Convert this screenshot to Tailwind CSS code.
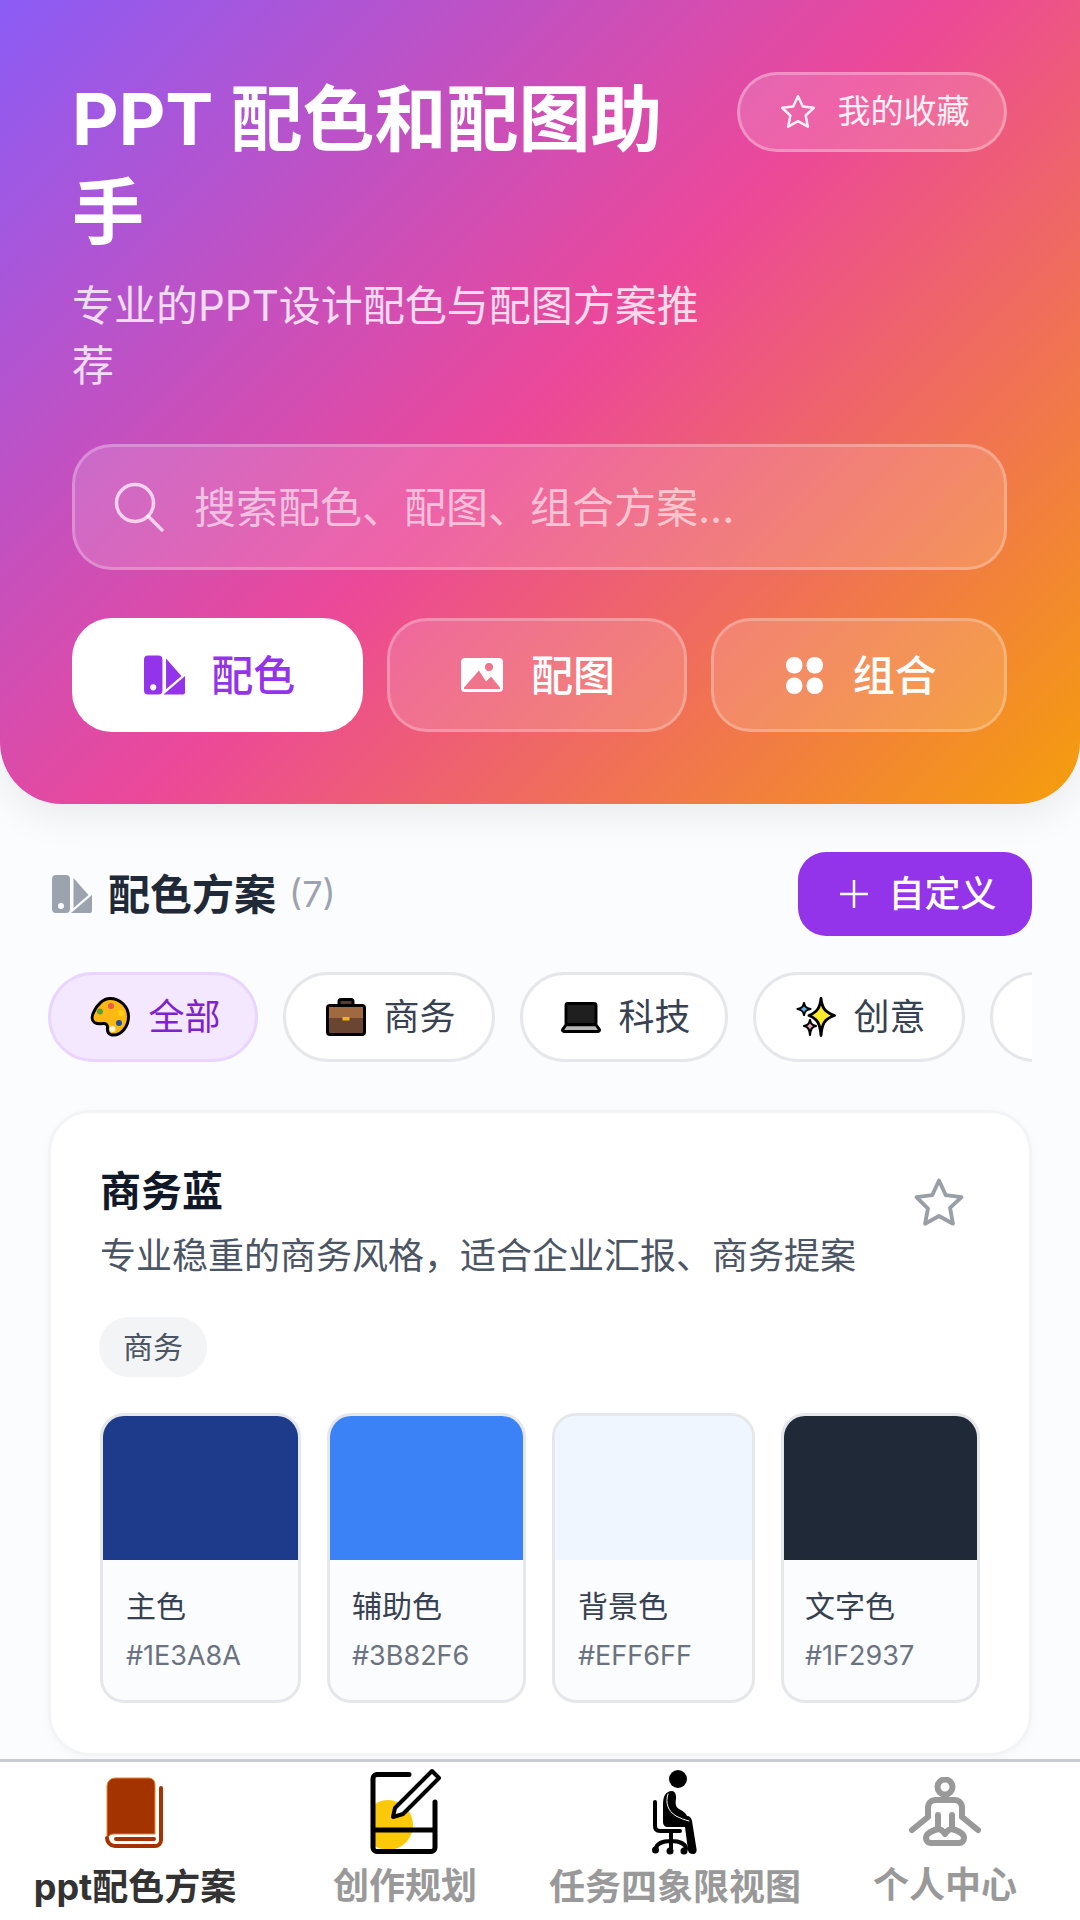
<!DOCTYPE html>
<html lang="zh-CN">
<head>
  <meta charset="UTF-8">
  <meta name="viewport" content="width=device-width, initial-scale=1">
  <title>PPT 配色和配图助手</title>
  <script src="https://cdn.jsdelivr.net/npm/@tailwindcss/browser@4"></script>
</head>
<body class="bg-[#fafcfe] font-['Inter','Noto_Sans_CJK_SC',sans-serif]">
<div class="w-[1080px] h-[1920px] flex flex-col overflow-hidden">

  <!-- 头部 -->
  <header class="h-[804px] shrink-0 pl-[72px] pr-[73px] pt-[72px] rounded-b-[62px] bg-[linear-gradient(135deg,#8b5cf6_0%,#ec4899_50%,#f59e0b_100%)] shadow-[0_10px_40px_rgba(0,0,0,0.08)] relative z-10">
    <div class="flex items-start gap-[24px]">
      <div class="flex-1">
        <h1 class="text-[72px] leading-[93px] font-bold text-white">PPT 配色和配图助手</h1>
        <p class="mt-[18px] text-[42px] leading-[60px] text-white/80">专业的PPT设计配色与配图方案推荐</p>
      </div>
      <button class="w-[270px] h-[80px] shrink-0 flex items-center justify-center gap-[20px] pl-[3px] rounded-full bg-white/15 border-[3px] border-white/30 text-white/90 text-[33px]">
        <svg class="w-[40px] h-[40px]" viewBox="0 0 24 24" fill="none" stroke="currentColor" stroke-width="1.500" stroke-linejoin="round"><path d="M12 2.500l2.900 6.200 6.600.8-4.900 4.600 1.300 6.700L12 17.500l-5.900 3.300 1.300-6.700L2.500 9.500l6.600-.8z"/></svg>
        <span>我的收藏</span>
      </button>
    </div>

    <div class="mt-[48px] h-[126px] flex items-center pl-[39px] gap-[30px] rounded-[40px] bg-white/15 border-[3px] border-white/25">
      <svg class="w-[50px] h-[50px] shrink-0 text-white/70" viewBox="0 0 50 50" fill="none" stroke="currentColor" stroke-width="3.500" stroke-linecap="round"><circle cx="21" cy="21" r="18.500"/><path d="M34 34l14 14"/></svg>
      <span class="text-[42px] text-white/60">搜索配色、配图、组合方案...</span>
    </div>

    <div class="mt-[48px] grid grid-cols-[291fr_299fr_296fr] gap-[24px]">
      <button class="h-[114px] flex items-center justify-center gap-[26px] pl-[4px] rounded-[40px] bg-white text-[#9333ea] text-[42px] font-medium">
        <svg class="w-[41px] h-[40px]" viewBox="0 0 40 38" fill="currentColor"><path fill-rule="evenodd" d="M4 0h10a4 4 0 0 1 4 4v30a4 4 0 0 1-4 4H4a4 4 0 0 1-4-4V4a4 4 0 0 1 4-4zm5 28a3 3 0 1 0 0 6 3 3 0 0 0 0-6z"/><path d="M21.500 3l15 17-15 13z"/><path d="M19 38l21-18v16a2 2 0 0 1-2 2z"/></svg>
        <span>配色</span>
      </button>
      <button class="h-[114px] flex items-center justify-center gap-[28px] pl-[2px] rounded-[40px] bg-white/15 border-[3px] border-white/25 text-white text-[42px] font-medium">
        <svg class="w-[42px] h-[34px]" viewBox="0 0 42 34"><path fill="currentColor" fill-rule="evenodd" d="M4 0h34a4 4 0 0 1 4 4v26a4 4 0 0 1-4 4H4a4 4 0 0 1-4-4V4a4 4 0 0 1 4-4zM3 29.500V31h36v-1.500l-9-11-5 5-7-11zM28 5a4 4 0 1 0 0 8 4 4 0 0 0 0-8z"/></svg>
        <span>配图</span>
      </button>
      <button class="h-[114px] flex items-center justify-center gap-[30px] pl-[5px] rounded-[40px] bg-white/15 border-[3px] border-white/25 text-white text-[42px] font-medium">
        <svg class="w-[37px] h-[37px]" viewBox="0 0 37 37" fill="currentColor"><rect width="16.500" height="16.500" rx="8"/><rect x="20.500" width="16.500" height="16.500" rx="8"/><rect y="20.500" width="16.500" height="16.500" rx="8"/><rect x="20.500" y="20.500" width="16.500" height="16.500" rx="8"/></svg>
        <span>组合</span>
      </button>
    </div>
  </header>

  <!-- 内容 -->
  <main class="flex-1 min-h-0 overflow-hidden px-[48px] pt-[48px]">
    <div class="flex items-center justify-between h-[84px]">
      <div class="flex items-center pl-[4px]">
        <svg class="w-[40px] h-[38px] text-[#9ca3af]" viewBox="0 0 40 38" fill="currentColor"><path fill-rule="evenodd" d="M4 0h10a4 4 0 0 1 4 4v30a4 4 0 0 1-4 4H4a4 4 0 0 1-4-4V4a4 4 0 0 1 4-4zm5 28a3 3 0 1 0 0 6 3 3 0 0 0 0-6z"/><path d="M21.500 3l15 17-15 13z"/><path d="M19 38l21-18v16a2 2 0 0 1-2 2z"/></svg>
        <h2 class="ml-[16px] text-[42px] font-bold text-[#1f2937]">配色方案</h2>
        <span class="ml-[13px] text-[36px] text-[#9ca3af]">(7)</span>
      </div>
      <button class="w-[234px] h-[84px] flex items-center justify-center gap-[19px] pl-[6px] rounded-[28px] bg-[#9333ea] text-white text-[36px] font-medium">
        <svg class="w-[30px] h-[30px]" viewBox="0 0 30 30" stroke="currentColor" stroke-width="2.500"><path d="M15 1v28M1 15h28"/></svg>
        <span>自定义</span>
      </button>
    </div>

    <div class="mt-[36px] flex gap-[25px] overflow-hidden">
      <button class="w-[210px] h-[90px] shrink-0 flex items-center justify-center gap-[18px] pl-[5px] rounded-full bg-[#f3e8ff] border-[3px] border-[#e9d5ff] text-[#7e22ce] text-[36px]">
        <svg class="w-[40px] h-[40px]" viewBox="0 0 40 40"><path fill="#fcb813" stroke="#000" stroke-width="3" d="M20 1.500c10 0 18.500 8 18.500 18 0 10-7 18.500-15 18.500-5 0-6.500-3.500-6-7 .4-3-1.500-5-4.500-4.500-3.500.6-6 .5-8.500-1-3-2-3-6.500-.5-11C7 8 13 1.500 20 1.500z"/><circle cx="10" cy="14.500" r="3" fill="#5c9e31"/><circle cx="21" cy="9" r="3" fill="#ea5a47"/><circle cx="31" cy="16" r="3" fill="#fcd116"/><circle cx="29" cy="26" r="3" fill="#1e50a0"/><circle cx="22.500" cy="32" r="3" fill="#fff6d5"/></svg>
        <span>全部</span>
      </button>
      <button class="w-[212px] h-[90px] shrink-0 flex items-center justify-center gap-[17px] pl-[4px] rounded-full bg-white border-[3px] border-[#e5e7eb] text-[#374151] text-[36px]">
        <svg class="w-[40px] h-[40px]" viewBox="0 0 40 40"><path fill="#5d3a2a" stroke="#000" stroke-width="3" d="M13 9V4.500a2 2 0 0 1 2-2h10a2 2 0 0 1 2 2V9"/><rect x="1.500" y="8.500" width="37" height="29" rx="2.500" fill="#6a4532" stroke="#000" stroke-width="3"/><rect x="3" y="10" width="34" height="11" fill="#a0693f"/><rect x="16.500" y="20" width="7" height="3.500" fill="#f1b31c"/></svg>
        <span>商务</span>
      </button>
      <button class="w-[208px] h-[90px] shrink-0 flex items-center justify-center gap-[17px] pl-[4px] rounded-full bg-white border-[3px] border-[#e5e7eb] text-[#374151] text-[36px]">
        <svg class="w-[40px] h-[31px]" viewBox="0 0 40 32"><rect x="4.500" y="1.500" width="31" height="22" rx="2" fill="#1f1f1f" stroke="#000" stroke-width="3"/><path fill="#b7b7b7" stroke="#000" stroke-width="3" stroke-linejoin="round" d="M4.500 23.500h31l3.500 5a1.500 1.500 0 0 1-1.500 2h-35a1.500 1.500 0 0 1-1.500-2z"/></svg>
        <span>科技</span>
      </button>
      <button class="w-[212px] h-[90px] shrink-0 flex items-center justify-center gap-[17px] pl-[4px] rounded-full bg-white border-[3px] border-[#e5e7eb] text-[#374151] text-[36px]">
        <svg class="w-[40px] h-[40px]" viewBox="0 0 40 40"><path fill="#fcea2b" stroke="#000" stroke-width="2.800" stroke-linejoin="round" d="M25 1.500c1 9 3.500 13.500 13.500 17-10 3.500-12.500 8-13.500 20-1-12-3.500-16.500-12-20 8.500-3.500 11-8 12-17z"/><path fill="#61b2e4" stroke="#000" stroke-width="2.200" stroke-linejoin="round" d="M8 6c.6 3.500 1.800 5 6.500 6-4.700 1-5.900 2.500-6.500 6-.6-3.500-1.800-5-6.500-6 4.700-1 5.900-2.500 6.500-6z"/><path fill="#e8a5c0" stroke="#000" stroke-width="2.200" stroke-linejoin="round" d="M14 23c.6 3.500 1.800 5 6 6-4.200 1-5.400 3-6 9-.6-6-1.800-8-6-9 4.200-1 5.400-2.500 6-6z"/></svg>
        <span>创意</span>
      </button>
      <button class="w-[212px] h-[90px] shrink-0 rounded-full bg-white border-[3px] border-[#e5e7eb]"></button>
    </div>

    <!-- 配色卡片 -->
    <article class="mt-[48px] h-[646px] px-[49px] pt-[48px] bg-white border-[3px] border-[#f3f4f6] rounded-[42px] shadow-[0_2px_10px_rgba(0,0,0,0.03)]">
      <div class="flex items-start">
        <div class="flex-1">
          <h3 class="text-[41px] leading-[60px] font-bold text-[#111827]">商务蓝</h3>
          <p class="mt-[5px] text-[36px] leading-[60px] text-[#4b5563]">专业稳重的商务风格，适合企业汇报、商务提案</p>
        </div>
        <svg class="w-[54px] h-[54px] mt-[15px] mr-[14px] text-[#9a9ea6]" viewBox="0 0 24 24" fill="none" stroke="currentColor" stroke-width="1.700" stroke-linejoin="round"><path d="M12 2l3 6.500 7 .9-5.100 4.800 1.300 7L12 17.800l-6.200 3.400 1.300-6.700L2 9.400l7-.9z"/></svg>
      </div>
      <span class="mt-[31px] -ml-[1px] flex items-center justify-center w-[108px] h-[60px] rounded-[30px] bg-[#f3f4f6] text-[#4b5563] text-[30px]">商务</span>
      <div class="mt-[36px] grid grid-cols-[201fr_199fr_203fr_199fr] gap-[26px]">
        <div class="h-[290px] rounded-[24px] border-[3px] border-[#e5e7eb] bg-[#fafcfe] overflow-hidden">
          <div class="h-[144px] bg-[#1e3a8a]"></div>
          <p class="pl-[23px] mt-[28px] text-[30px] leading-[36px] text-[#374151]">主色</p>
          <p class="pl-[23px] mt-[13px] text-[27px] leading-[38px] text-[#6b7280]">#1E3A8A</p>
        </div>
        <div class="h-[290px] rounded-[24px] border-[3px] border-[#e5e7eb] bg-[#fafcfe] overflow-hidden">
          <div class="h-[144px] bg-[#3b82f6]"></div>
          <p class="pl-[22px] mt-[28px] text-[30px] leading-[36px] text-[#374151]">辅助色</p>
          <p class="pl-[22px] mt-[13px] text-[27px] leading-[38px] text-[#6b7280]">#3B82F6</p>
        </div>
        <div class="h-[290px] rounded-[24px] border-[3px] border-[#e5e7eb] bg-[#fafcfe] overflow-hidden">
          <div class="h-[144px] bg-[#eff6ff]"></div>
          <p class="pl-[23px] mt-[28px] text-[30px] leading-[36px] text-[#374151]">背景色</p>
          <p class="pl-[23px] mt-[13px] text-[27px] leading-[38px] text-[#6b7280]">#EFF6FF</p>
        </div>
        <div class="h-[290px] rounded-[24px] border-[3px] border-[#e5e7eb] bg-[#fafcfe] overflow-hidden">
          <div class="h-[144px] bg-[#1f2937]"></div>
          <p class="pl-[21px] mt-[28px] text-[30px] leading-[36px] text-[#374151]">文字色</p>
          <p class="pl-[21px] mt-[13px] text-[27px] leading-[38px] text-[#6b7280]">#1F2937</p>
        </div>
      </div>
    </article>
  </main>

  <!-- 底部导航 -->
  <nav class="h-[161px] shrink-0 grid grid-cols-4 bg-white border-t-[3px] border-[#c9cbce] text-[36px] font-bold text-[#999999] text-center">
    <div class="flex flex-col items-center pt-[15px]">
      <svg class="w-[60px] h-[72px]" viewBox="0 0 60 72"><path fill="#a33300" stroke="#e8872c" stroke-width="1" d="M10 1h34a6 6 0 0 1 6 6v50H10a8 8 0 0 0-8 5V9a8 8 0 0 1 8-8z"/><path fill="none" stroke="#a33300" stroke-width="4" stroke-linecap="round" d="M56 11v52a6 6 0 0 1-6 6H10a8 8 0 0 1-8-8"/><path stroke="#a33300" stroke-width="4" stroke-linecap="round" d="M11 62h38"/></svg>
      <span class="mt-[14px] leading-[48px] text-[#333333]">ppt配色方案</span>
    </div>
    <div class="flex flex-col items-center pt-[7px]">
      <svg class="w-[72px] h-[86px] -mt-[1px]" viewBox="0 0 72 86"><circle cx="19" cy="57" r="25" fill="#fcc80a"/><path fill="#fff" d="M0 83h72v3H0zM0 30h3v56H0z"/><path fill="none" stroke="#000" stroke-width="5" stroke-linecap="round" stroke-linejoin="round" d="M40 6.500H8a4 4 0 0 0-4 4v69a4 4 0 0 0 4 4h54a4 4 0 0 0 4-4V34M4 62h62"/><path fill="#fff" stroke="#000" stroke-width="4" stroke-linejoin="round" d="M63 3l7 7-36 36-10 3 2-9z"/></svg>
      <span class="mt-[8px] leading-[48px]">创作规划</span>
    </div>
    <div class="flex flex-col items-center pt-[7px]">
      <svg class="w-[46px] h-[86px]" viewBox="0 0 46 86" fill="#000"><circle cx="26" cy="10" r="9"/><path d="M20 22c-6 0-9 5-9 13v18c0 3 2 5 5 5h17l3 23c.5 3 2.500 4 5 4s4-2 3.500-5L40 52c-.5-3-2-5-5-5-1-3-4-5-8-7-3-1.500-4-5-3-10 .5-4-1-8-4-8z"/><path fill="none" stroke="#000" stroke-width="4" stroke-linecap="round" d="M3 33v24c0 4 2 5 5 5h20M19 62v10M4 80c0-5 6-8 15-8s15 3 15 8M19 72v9"/><path fill="none" stroke="#fff" stroke-width="1" stroke-linecap="round" d="M16 25c-3 9 0 17 8 22 4 2 9 4 13 5"/><circle cx="3.500" cy="81" r="3.500"/><circle cx="18" cy="82" r="3.500"/><circle cx="32" cy="82" r="3.500"/></svg>
      <span class="mt-[8px] leading-[48px]">任务四象限视图</span>
    </div>
    <div class="flex flex-col items-center pt-[15px]">
      <svg class="w-[72px] h-[70px]" viewBox="0 0 72 70" fill="none" stroke="#999999" stroke-width="6" stroke-linecap="round" stroke-linejoin="round"><circle cx="36" cy="10" r="7.500"/><path d="M19 38V31c0-5 3-8 8-8h18c5 0 8 3 8 8v7"/><path d="M29 38v14M43 38v14M19 40L3 53M53 40l16 13"/><path d="M29 52c-7 2-12 5-12 9 0 3 2 5 5 5h28c3 0 5-2 5-5 0-4-5-7-12-9-2 0-5 2-7 5-2-3-5-5-7-5z"/></svg>
      <span class="mt-[14px] leading-[48px]">个人中心</span>
    </div>
  </nav>
</div>
</body>
</html>
